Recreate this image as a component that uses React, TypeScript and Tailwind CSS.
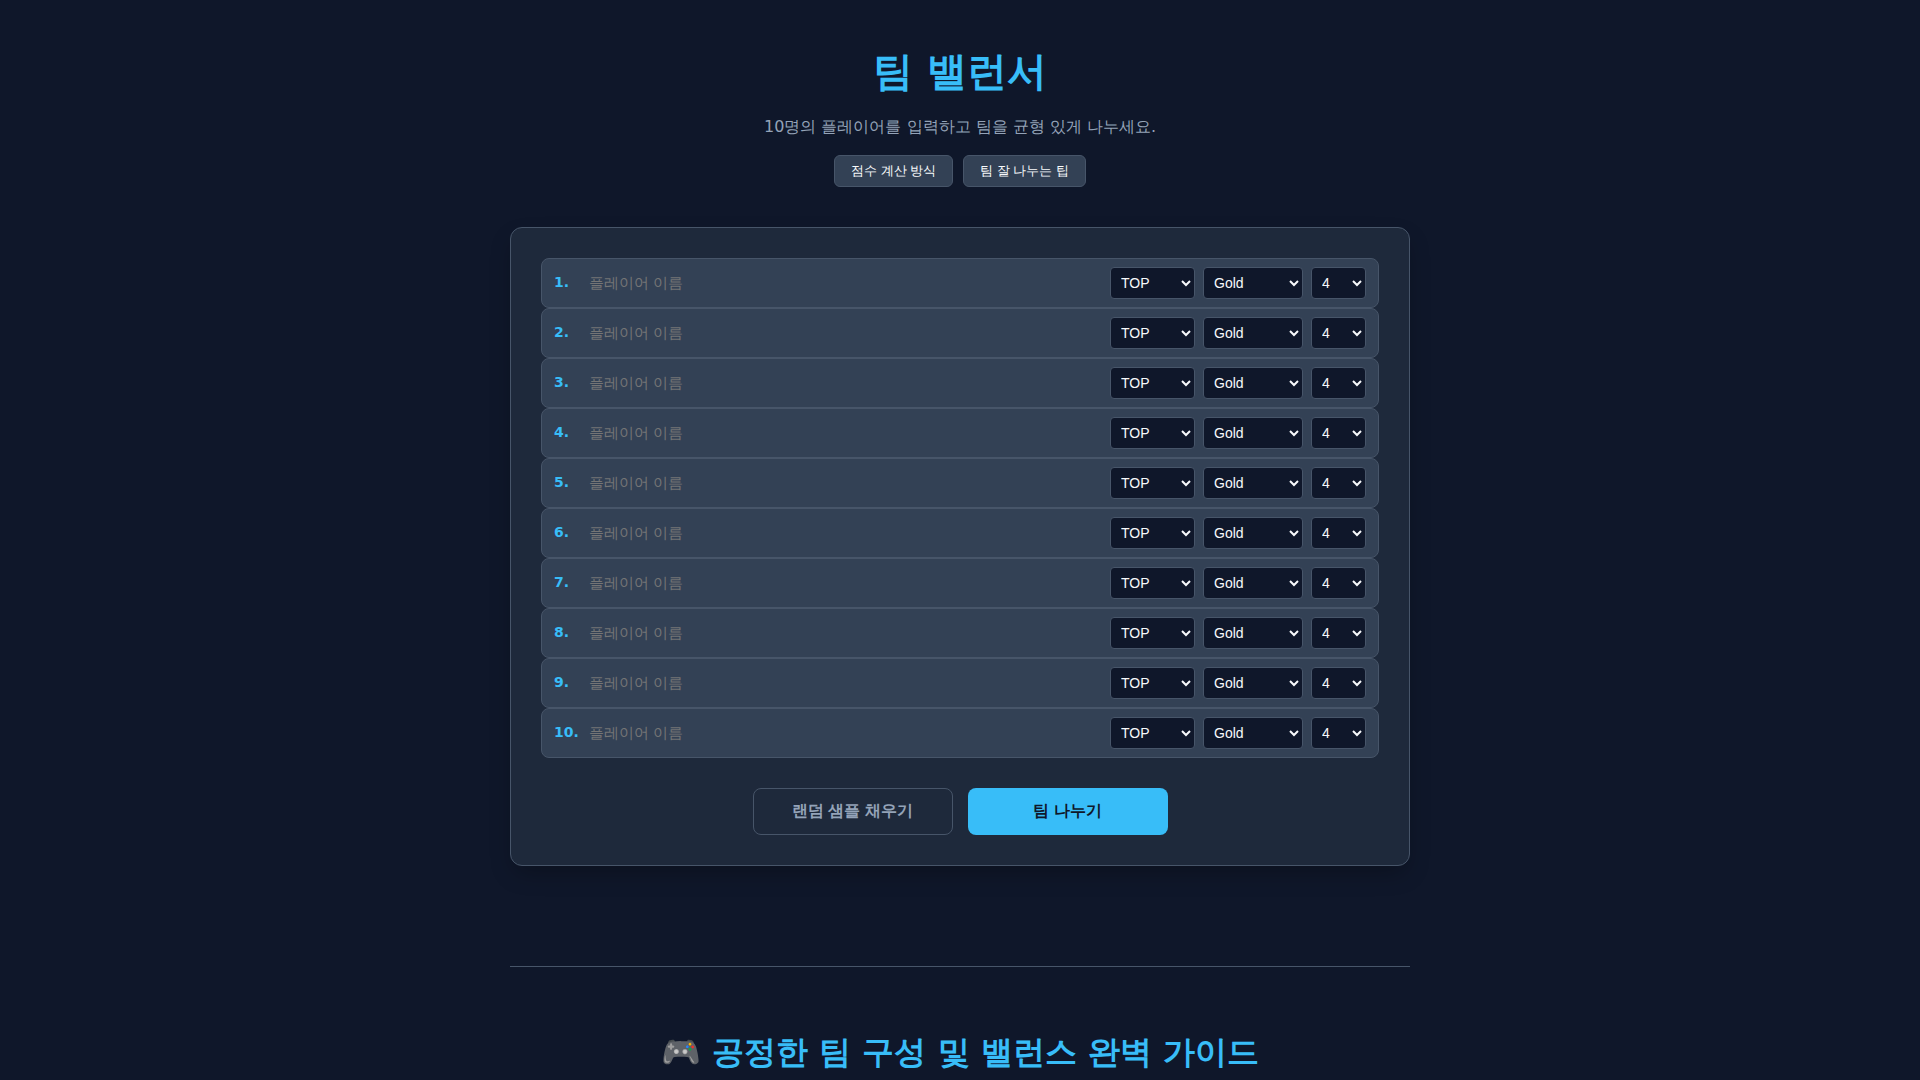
import React, { useState } from "react";

const POSITIONS = ["TOP", "JUNGLE", "MID", "ADC", "SUPPORT"];
const TIERS = ["Iron", "Bronze", "Silver", "Gold", "Platinum", "Emerald", "Diamond"];
const DIVISIONS = ["4", "3", "2", "1"];

interface Player {
  name: string;
  position: string;
  tier: string;
  division: string;
}

interface SelectProps {
  label: string;
  value: string;
  options: string[];
  width: string;
  onChange: (value: string) => void;
}

const Select = ({ label, value, options, width, onChange }: SelectProps) => {
  return (
    <select
      aria-label={label}
      value={value}
      onChange={(e) => onChange(e.target.value)}
      className={`${width} h-8 shrink-0 rounded border border-[#475569] bg-[#0f172a] px-1.5 font-['Liberation_Sans',sans-serif] text-sm text-[#f8fafc]`}
    >
      {options.map((option) => (
        <option key={option}>{option}</option>
      ))}
    </select>
  );
};

interface PlayerRowProps {
  index: number;
  player: Player;
  onChange: (patch: Partial<Player>) => void;
}

const PlayerRow = ({ index, player, onChange }: PlayerRowProps) => {
  const id = `player-${index}`;

  return (
    <li className="flex items-center gap-2 rounded-lg border border-[#475569] bg-[#334155] px-3 py-2">
      <label htmlFor={id} className="w-[25px] shrink-0 pb-0.5 text-sm font-bold text-[#38bdf8]">
        {index}.
      </label>
      <input
        id={id}
        type="text"
        placeholder="플레이어 이름"
        value={player.name}
        onChange={(e) => onChange({ name: e.target.value })}
        className="h-8 min-w-0 flex-1 bg-transparent px-0.5 pb-0.5 font-['Liberation_Sans',sans-serif] text-[15px] text-[#f8fafc] outline-none placeholder:text-[#757575]"
      />
      <Select
        label={`${index} 포지션`}
        value={player.position}
        options={POSITIONS}
        width="w-[85px]"
        onChange={(position) => onChange({ position })}
      />
      <Select
        label={`${index} 티어`}
        value={player.tier}
        options={TIERS}
        width="w-[100px]"
        onChange={(tier) => onChange({ tier })}
      />
      <Select
        label={`${index} 단계`}
        value={player.division}
        options={DIVISIONS}
        width="w-[55px]"
        onChange={(division) => onChange({ division })}
      />
    </li>
  );
};

const emptyPlayers = (): Player[] =>
  Array.from({ length: 10 }, () => ({
    name: "",
    position: "TOP",
    tier: "Gold",
    division: "4",
  }));

const App = () => {
  const [players, setPlayers] = useState<Player[]>(emptyPlayers);

  const updatePlayer = (index: number, patch: Partial<Player>) => {
    setPlayers((prev) => prev.map((p, i) => (i === index ? { ...p, ...patch } : p)));
  };

  return (
    <div className="h-screen overflow-hidden bg-[#0f172a] px-5 pt-10 font-['DejaVu_Sans',sans-serif] text-[#f8fafc]">
      <div className="mx-auto max-w-[900px]">
        <header className="mb-10 text-center">
          <h1 className="text-[40px] leading-[62px] font-bold text-[#38bdf8]">팀 밸런서</h1>
          <p className="mt-3 text-base leading-[26px] text-[#94a3b8]">
            10명의 플레이어를 입력하고 팀을 균형 있게 나누세요.
          </p>
          <nav className="mt-[15px] flex justify-center gap-2.5 font-['Liberation_Sans',sans-serif]">
            <button className="h-8 rounded-md border border-[#475569] bg-[#334155] px-4 text-[13px]">
              점수 계산 방식
            </button>
            <button className="h-8 rounded-md border border-[#475569] bg-[#334155] px-4 text-[13px]">
              팀 잘 나누는 팁
            </button>
          </nav>
        </header>

        <main className="rounded-xl border border-[#475569] bg-[#1e293b] p-[30px] shadow-[0_10px_25px_-5px_rgba(0,0,0,0.3)]">
          <ul>
            {players.map((player, i) => (
              <PlayerRow
                key={i}
                index={i + 1}
                player={player}
                onChange={(patch) => updatePlayer(i, patch)}
              />
            ))}
          </ul>
          <div className="mt-[30px] flex justify-center gap-[15px] font-['Liberation_Sans',sans-serif] text-base font-bold">
            <button className="h-[47px] w-[200px] rounded-lg border border-[#475569] pb-0.5 text-[#94a3b8]">
              랜덤 샘플 채우기
            </button>
            <button className="h-[47px] w-[200px] rounded-lg bg-[#38bdf8] pb-0.5 text-[#0f172a]">
              팀 나누기
            </button>
          </div>
        </main>

        <section className="mt-[100px] border-t border-[#475569] pt-[60px] text-center">
          <h2 className="text-[32px] leading-[50px] font-bold text-[#38bdf8]">
            🎮 공정한 팀 구성 및 밸런스 완벽 가이드
          </h2>
        </section>
      </div>
    </div>
  );
};

export default App;
